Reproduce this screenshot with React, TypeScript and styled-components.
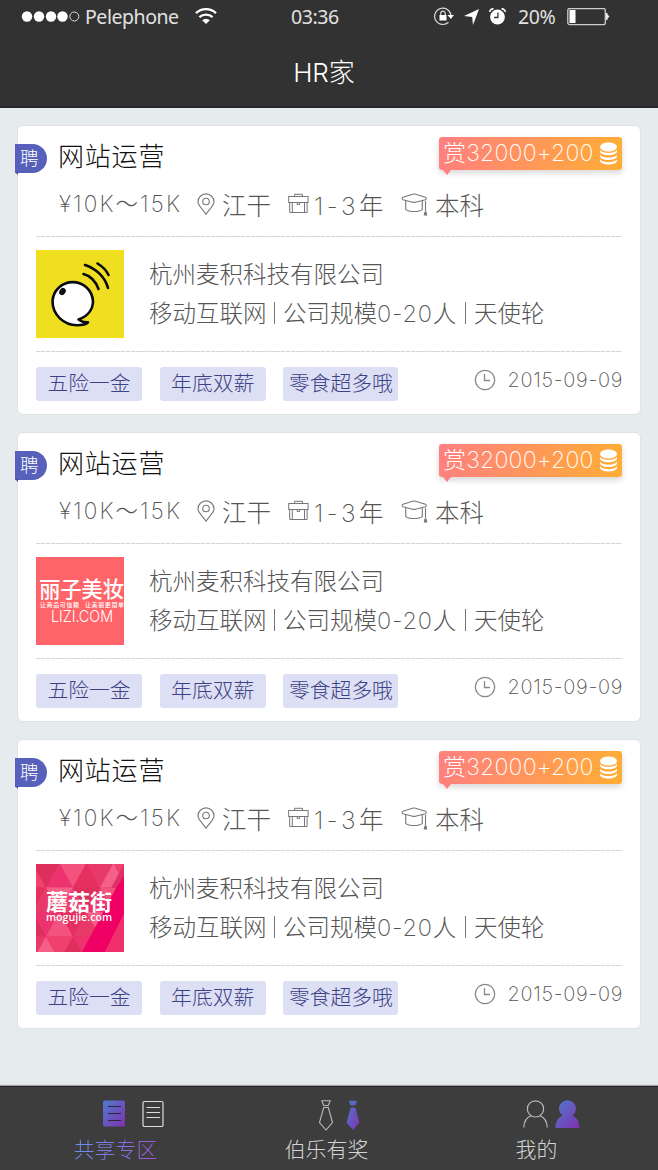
import React from "react";
import styled, { createGlobalStyle } from "styled-components";

const GlobalStyle = createGlobalStyle`
  * { box-sizing: border-box; }
  body {
    margin: 0;
    background: #e6ebee;
    font-family: Inter, "Noto Sans CJK SC", sans-serif;
    font-weight: 300;
    color: #555;
  }
  svg { display: block; flex: none; }
`;

const Screen = styled.div`
  width: 658px;
  height: 1170px;
  display: flex;
  flex-direction: column;
  overflow: hidden;
  background: #e6ebee;
`;

const Header = styled.header`
  height: 108px;
  flex: none;
  background: #323232;
  border-bottom: 2px solid #282828;
  color: #fff;
`;

const StatusBar = styled.div`
  height: 34px;
  display: grid;
  grid-template-columns: 291px 143px 1fr;
  align-items: center;
  font-family: "Noto Sans", sans-serif;
  font-weight: 400;
  font-size: 19.5px;
  line-height: 34px;
  letter-spacing: -0.45px;
  color: #e2e2e2;
`;

const Carrier = styled.div`
  display: flex;
  align-items: center;
  padding-left: 21px;
`;

const CarrierName = styled.span`
  width: 94px;
  margin: 0 16px 0 5px;
  white-space: nowrap;
`;

const StatusIcons = styled.div`
  display: flex;
  align-items: center;
`;

const IconGroup = styled.div`
  display: flex;
  align-items: center;
  gap: 10px;
`;

const Percent = styled.span`
  width: 38px;
  margin: 0 11px 0 12px;
`;

const PageTitle = styled.h1`
  margin: 0;
  height: 76px;
  display: flex;
  align-items: center;
  justify-content: center;
  padding: 2px 10px 0 0;
  font-size: 26px;
  font-weight: 300;
  line-height: 40px;
  letter-spacing: 0;
`;

const List = styled.main`
  flex: 1;
  min-height: 0;
  padding: 17px 17px 0 17px;
  display: flex;
  flex-direction: column;
  gap: 17px;
`;

const Card = styled.article`
  height: 290px;
  flex: none;
  background: #fff;
  border: 1px solid #dde2e5;
  border-radius: 6px;
  padding: 0 18px;
`;

const TitleRow = styled.div`
  display: flex;
  align-items: flex-start;
  height: 58px;
  padding-top: 11px;
`;

const HireBadge = styled.span`
  position: relative;
  width: 32px;
  height: 29px;
  margin: 7px 0 0 -21px;
  border-radius: 0 15px 15px 0;
  background: #5760ba;
  color: #fff;
  font-size: 18.5px;
  line-height: 29px;
  padding-left: 5px;
  &::after {
    content: "";
    position: absolute;
    left: 0;
    top: 28px;
    border-top: 3px solid #454da2;
    border-left: 3px solid transparent;
  }
`;

const JobTitle = styled.h2`
  margin: 0 0 0 11px;
  flex: 1;
  font-size: 26px;
  font-weight: 300;
  line-height: 40px;
  letter-spacing: 0.8px;
  color: #111;
`;

const Reward = styled.div`
  position: relative;
  width: 183px;
  height: 33px;
  display: flex;
  align-items: center;
  justify-content: space-between;
  padding: 0 4px;
  border-radius: 3px;
  background: linear-gradient(100deg, #ff7f80, #ffae35);
  box-shadow: 0 3px 6px rgba(0, 0, 0, 0.16);
  color: #fff;
  font-size: 23px;
  font-weight: 250;
  letter-spacing: 0.2px;
  line-height: 33px;
  white-space: nowrap;
  &::after {
    content: "";
    position: absolute;
    left: 4px;
    top: 33px;
    border: 4px solid transparent;
    border-top: 5px solid #ff7f80;
    border-bottom: 0;
  }
`;

const MetaRow = styled.div`
  height: 52px;
  display: grid;
  grid-template-columns: 138px 25px 66px 26px 87px 34px 1fr;
  align-items: start;
  padding: 9px 0 0 23px;
  white-space: nowrap;
`;

const Salary = styled.span`
  font-size: 22.5px;
  line-height: 21px;
  letter-spacing: 2.1px;
  font-weight: 200;
  color: #555;
`;

const Meta = styled.span`
  font-size: 24.5px;
  line-height: 27px;
`;

const Divider = styled.hr`
  margin: 0;
  height: 1px;
  border: 0;
  background: repeating-linear-gradient(90deg, #d6d6d6 0 4px, #eee 4px 5px);
`;

const Company = styled.section`
  height: 114px;
  display: flex;
  align-items: center;
  gap: 25px;
`;

const CompanyLines = styled.div`
  flex: 1;
  font-size: 23.5px;
  line-height: 39.5px;
  white-space: nowrap;
`;

const Facts = styled.div`
  display: flex;
  align-items: center;
`;

const Fact = styled.span<{ $width: number }>`
  width: ${(p) => p.$width}px;
`;

const Digits = styled.span<{ $spacing: number }>`
  font-weight: 250;
  letter-spacing: ${(p) => p.$spacing}px;
`;

const Bar = styled.i`
  width: 1px;
  height: 22px;
  background: #777;
  margin: 0 8px 2px;
`;

const Footer = styled.footer`
  display: flex;
  align-items: flex-start;
  gap: 17.7px;
  padding-top: 15px;
`;

const Tag = styled.span<{ $wide?: boolean }>`
  width: ${(p) => (p.$wide ? 115 : 106)}px;
  height: 34px;
  border-radius: 3px;
  background: #dddff4;
  color: #3b4285;
  font-size: 20.8px;
  line-height: 34.5px;
  text-align: center;
  white-space: nowrap;
`;

const Posted = styled.time`
  margin-left: auto;
  margin-right: -1px;
  display: flex;
  align-items: center;
  gap: 12px;
  height: 26px;
  font-size: 20px;
  font-weight: 250;
  letter-spacing: 0.65px;
  color: #555;
  white-space: nowrap;
`;

const NavBar = styled.nav`
  height: 84px;
  flex: none;
  display: grid;
  grid-template-columns: 231px 191px 1fr;
  background: #3c3d3c;
  border-top: 1px solid #222;
  box-shadow: 0 -1px 1px rgba(0, 0, 0, 0.3);
`;

const NavItem = styled.a<{ $pull?: number }>`
  display: flex;
  flex-direction: column;
  align-items: center;
  padding-top: 13px;
  padding-right: ${(p) => p.$pull ?? 0}px;
  color: #d5d5d5;
`;

const NavIcons = styled.div<{ $gap: number; $shift: number }>`
  display: flex;
  align-items: flex-start;
  height: 32px;
  gap: ${(p) => p.$gap}px;
  margin-left: ${(p) => p.$shift}px;
`;

const NavLabel = styled.span<{ $active?: boolean }>`
  font-size: 20.9px;
  line-height: 35px;
  ${(p) =>
    p.$active &&
    `background: linear-gradient(90deg, #6a90f0, #a055d8);
     background-clip: text;
     -webkit-background-clip: text;
     color: transparent;`}
`;

const SignalDots = () => (
  <svg width="59" height="12" viewBox="0 0 59 12">
    {[6, 18, 30, 41.5].map((x) => (
      <circle key={x} cx={x} cy="5.5" r="5.2" fill="#fff" />
    ))}
    <circle cx="53.3" cy="5.5" r="4.5" fill="none" stroke="#ddd" />
  </svg>
);

const WifiIcon = () => (
  <svg width="22" height="18" viewBox="0 0 22 18" fill="none" stroke="#fff" strokeWidth="2.3">
    <path d="M1 5.2a14.5 14.5 0 0 1 20 0M4.400 9.200a9.600 9.600 0 0 1 13.200 0" />
    <path d="M7.200 12.200a5.400 5.400 0 0 1 7.600 0L11 16z" fill="#fff" stroke="none" />
  </svg>
);

const LockIcon = () => (
  <svg width="20" height="20" viewBox="0 0 20 20" fill="none" stroke="#ddd" strokeWidth="1.2">
    <path d="M14.500 15.200A8.200 8.200 0 1 1 17 8.500" />
    <path d="M13.500 8h6.500l-3.200 4z" fill="#fff" stroke="none" />
    <path d="M6.800 8.500V6.300a2.200 2.200 0 0 1 4.400 0v2.200" />
    <rect x="5.500" y="8" width="7" height="5.500" fill="#fff" stroke="none" />
  </svg>
);

const ArrowIcon = () => (
  <svg width="15" height="16" viewBox="0 0 15 16">
    <path d="M15 0 9 16 8.200 8 0 7z" fill="#fff" />
  </svg>
);

const AlarmIcon = () => (
  <svg width="17" height="18" viewBox="0 0 17 18">
    <circle cx="8.5" cy="9" r="7.400" fill="#fff" />
    <path d="M.8 4A3 3 0 0 1 4.500 1M12.500 1a3 3 0 0 1 3.700 3" stroke="#fff" strokeWidth="1.600" fill="none" />
    <path d="M8.900 4.500v5H5" stroke="#333" strokeWidth="1.300" fill="none" />
  </svg>
);

const BatteryIcon = () => (
  <svg width="43" height="18" viewBox="0 0 43 18">
    <rect x=".8" y=".5" width="37.5" height="16.2" rx="2" fill="none" stroke="#ccc" strokeWidth="1.3" />
    <rect x="2.5" y="2" width="6" height="13" fill="#fff" />
    <path d="M39 5h1.500v1.500l2 2-2 2V12H39z" fill="#eee" />
  </svg>
);

const CoinsIcon = () => (
  <svg width="19" height="24" viewBox="0 0 19 24">
    <ellipse cx="9.500" cy="5" rx="8.500" ry="4.500" fill="#fff" />
    {[0, 4.6, 9.2].map((y) => (
      <path key={y} d={`M1 ${7.8 + y}c2 4.200 15 4.200 17 0v1.800c-1 5-16 5-17 0z`} fill="#fff" />
    ))}
  </svg>
);

const PinIcon = () => (
  <svg width="18" height="22" viewBox="0 0 18 22" fill="none" stroke="#777" strokeWidth="1.1">
    <path d="M9 21.300C6 16.500 1 12.500 1 8.900a8 8 0 0 1 16 0C17 12.500 12 16.500 9 21.300z" />
    <circle cx="9" cy="8.500" r="3.300" />
  </svg>
);

const CaseIcon = () => (
  <svg width="21" height="21" viewBox="0 0 21 21" fill="none" stroke="#777" strokeWidth="1">
    <rect x=".7" y="3.500" width="19.400" height="6" />
    <path d="M1.700 9.500V19.500h17.400V9.500M6.500 3.500V1.300h8v2.200M4.300 9.500v10M16.500 9.500v10M9.200 9.500v2h2.400v-2" />
  </svg>
);

const CapIcon = () => (
  <svg width="27" height="24" viewBox="0 0 27 24" fill="none" stroke="#777" strokeWidth="1.1">
    <path d="M2 4.300 11.500 1.200c1-.3 2-.3 3 0L24.500 4.300c1 .4 1 2 0 2.400L14.500 9.200c-1 .3-2 .3-3 0L2 6.700C.8 6.300.8 4.800 2 4.300zM4.700 7.800v8.500c3 3 13.500 3 16.600 0V7.800M24.500 8v10" />
    <path d="M23.500 18.500h2l.8 4h-3.600z" fill="#777" stroke="none" />
  </svg>
);

const ClockIcon = () => (
  <svg width="22" height="22" viewBox="0 0 22 22" fill="none" stroke="#888" strokeWidth="1.3">
    <circle cx="11" cy="11" r="9.700" />
    <path d="M10.500 5v6.500H16" />
  </svg>
);

const SpeakerLogo = () => (
  <svg width="88" height="88" viewBox="0 0 88 88">
    <rect width="88" height="88" fill="#f0df20" />
    <path
      d="M42.500 69.500C51 66.500 57 60 57 51A20.300 20.300 0 0 0 16.500 51C16.500 65 28 75.200 41 75.200 46 75.200 50 74.500 52 72.300 49 72.500 45 71.500 42.500 69.500z"
      fill="#fff"
      stroke="#0b0b12"
      strokeWidth="2.600"
      strokeLinejoin="round"
    />
    <ellipse cx="26.500" cy="41.500" rx="3" ry="3.800" transform="rotate(35 26.500 41.500)" fill="#111" />
    <path d="M47.500 24C54 25.500 60 31.500 62.500 39M49 15C60 18.500 69 27 72 38M61.500 13.500C66.500 16.500 70.500 20.500 72.500 25" fill="none" stroke="#0b0b12" strokeWidth="2.600" strokeLinecap="round" />
  </svg>
);

const LiziLogo = () => (
  <svg width="88" height="88" viewBox="0 0 88 88" fill="#fff" fontFamily='"Noto Sans CJK SC", sans-serif'>
    <rect width="88" height="88" fill="#ff6468" />
    <text x="3" y="39.500" fontSize="21.500" fontWeight="500" textLength="85">丽子美妆</text>
    <text x="4" y="50" fontSize="6" fontWeight="500" textLength="39">让商品可信赖</text>
    <text x="49" y="50" fontSize="6" fontWeight="500" textLength="39">让美丽更简单</text>
    <text x="15" y="65" fontSize="16" fontWeight="300" fontFamily="Inter, sans-serif" textLength="62" lengthAdjust="spacingAndGlyphs">LIZI.COM</text>
  </svg>
);

const shades = ["#f0406e", "#e83a68", "#f2527d", "#dc2f5c", "#f55f88", "#e5305f", "#ec3370"];

const MogujieLogo = () => (
  <svg width="88" height="88" viewBox="0 0 88 88" fill="#fff">
    <rect width="88" height="88" fill="#ec2f69" />
    {[0, 1, 2, 3].map((row) =>
      Array.from({ length: 9 }, (_, col) => {
        const x = col * 13.5 - 17;
        const y = row * 24.5 - 1;
        const up = (row + col) % 2 === 0;
        return (
          <polygon
            key={`${row}-${col}`}
            points={up ? `${x},${y + 24.5} ${x + 13.5},${y} ${x + 27},${y + 24.5}` : `${x},${y} ${x + 27},${y} ${x + 13.5},${y + 24.5}`}
            fill={shades[(col * 3 + row * 5) % 7]}
          />
        );
      })
    )}
    <path d="M88 0v24H75z" fill="#e0306a" />
    <path d="M88 12v38L69 88H46L80 24z" fill="#ee0064" />
    <path d="M88 50v38H69z" fill="#f0306c" />
    <text x="10" y="45.500" fontSize="22" fontWeight="700" fontFamily='"Noto Sans CJK SC", sans-serif' textLength="66">蘑菇街</text>
    <text x="10" y="57" fontSize="11.500" fontWeight="600" fontFamily='"Open Sans", sans-serif' textLength="66" lengthAdjust="spacingAndGlyphs">mogujie.com</text>
  </svg>
);

const Gradient = ({ id }: { id: string }) => (
  <defs>
    <linearGradient id={id} x1="0" y1="0" x2="1" y2="1">
      <stop offset="0.1" stopColor="#5474ca" />
      <stop offset="1" stopColor="#8030b0" />
    </linearGradient>
  </defs>
);

const ListIcon = ({ filled }: { filled?: boolean }) => (
  <svg width="22" height="27" viewBox="0 0 22 27">
    <Gradient id="list-fill" />
    <rect x={filled ? 0 : 1} y={filled ? 0.5 : 1.5} width={filled ? 22 : 20} height={filled ? 26 : 25} rx="1.500" fill={filled ? "url(#list-fill)" : "none"} stroke={filled ? "none" : "#ddd"} strokeWidth="1.200" />
    <path d={filled ? "M5 6.500h13M5 13.500h13M5 20.500h13" : "M4.500 7.500h13.500M4.500 12.500h13.500M4.500 17.500h13.500"} stroke={filled ? "#282838" : "#ddd"} strokeWidth="1.100" />
  </svg>
);

const TieIcon = ({ filled }: { filled?: boolean }) => (
  <svg width="14" height="31" viewBox="0 0 14 31" fill={filled ? "url(#tie-fill)" : "none"} stroke={filled ? "none" : "#bbb"} strokeWidth="1.100">
    <Gradient id="tie-fill" />
    <path d="M2.800.8h8.400L9.300 5.500H4.700zM4.700 7.500h4.600L13.500 22.500 7 30 .5 22.500z" />
  </svg>
);

const UserIcon = ({ filled }: { filled?: boolean }) => (
  <svg width="25" height="28" viewBox="0 0 25 28" fill={filled ? "url(#user-fill)" : "none"} stroke={filled ? "none" : "#bbb"} strokeWidth="1.200">
    <Gradient id="user-fill" />
    {filled ? (
      <path d="M7.500 15.500a8.500 8.500 0 1 1 10 0C22 18 24.500 21 24.500 28H.5C.5 21 3 18 7.500 15.500z" />
    ) : (
      <path d="M12.500.8a8 8 0 1 1 0 16.200 8 8 0 1 1 0-16.200zM.8 27.500C.8 21.500 4 17.500 8 15.800M24.200 27.500C24.200 21.500 21 17.500 17 15.800" />
    )}
  </svg>
);

const JobCard = ({ logo }: { logo: React.ReactNode }) => (
  <Card>
    <TitleRow>
      <HireBadge>聘</HireBadge>
      <JobTitle>网站运营</JobTitle>
      <Reward>
        <span>赏32000+200</span>
        <CoinsIcon />
      </Reward>
    </TitleRow>
    <MetaRow>
      <Salary>¥10K～15K</Salary>
      <PinIcon />
      <Meta>江干</Meta>
      <CaseIcon />
      <Meta>
        <Digits $spacing={3.5}>1-3</Digits>年
      </Meta>
      <CapIcon />
      <Meta>本科</Meta>
    </MetaRow>
    <Divider />
    <Company>
      {logo}
      <CompanyLines>
        <div>杭州麦积科技有限公司</div>
        <Facts>
          <Fact $width={117}>移动互联网</Fact>
          <Bar />
          <Fact $width={174}>
            公司规模<Digits $spacing={0.8}>0-20</Digits>人
          </Fact>
          <Bar />
          <Fact $width={72}>天使轮</Fact>
        </Facts>
      </CompanyLines>
    </Company>
    <Divider />
    <Footer>
      <Tag>五险一金</Tag>
      <Tag>年底双薪</Tag>
      <Tag $wide>零食超多哦</Tag>
      <Posted>
        <ClockIcon />
        2015-09-09
      </Posted>
    </Footer>
  </Card>
);

export default function App() {
  return (
    <Screen>
      <GlobalStyle />
      <Header>
        <StatusBar>
          <Carrier>
            <SignalDots />
            <CarrierName>Pelephone</CarrierName>
            <WifiIcon />
          </Carrier>
          <span>03:36</span>
          <StatusIcons>
            <IconGroup>
              <LockIcon />
              <ArrowIcon />
              <AlarmIcon />
            </IconGroup>
            <Percent>20%</Percent>
            <BatteryIcon />
          </StatusIcons>
        </StatusBar>
        <PageTitle>HR家</PageTitle>
      </Header>
      <List>
        <JobCard logo={<SpeakerLogo />} />
        <JobCard logo={<LiziLogo />} />
        <JobCard logo={<MogujieLogo />} />
      </List>
      <NavBar>
        <NavItem>
          <NavIcons $gap={17} $shift={36}>
            <ListIcon filled />
            <ListIcon />
          </NavIcons>
          <NavLabel $active>共享专区</NavLabel>
        </NavItem>
        <NavItem>
          <NavIcons $gap={13} $shift={26}>
            <TieIcon />
            <TieIcon filled />
          </NavIcons>
          <NavLabel>伯乐有奖</NavLabel>
        </NavItem>
        <NavItem $pull={7}>
          <NavIcons $gap={7} $shift={29}>
            <UserIcon />
            <UserIcon filled />
          </NavIcons>
          <NavLabel>我的</NavLabel>
        </NavItem>
      </NavBar>
    </Screen>
  );
}
